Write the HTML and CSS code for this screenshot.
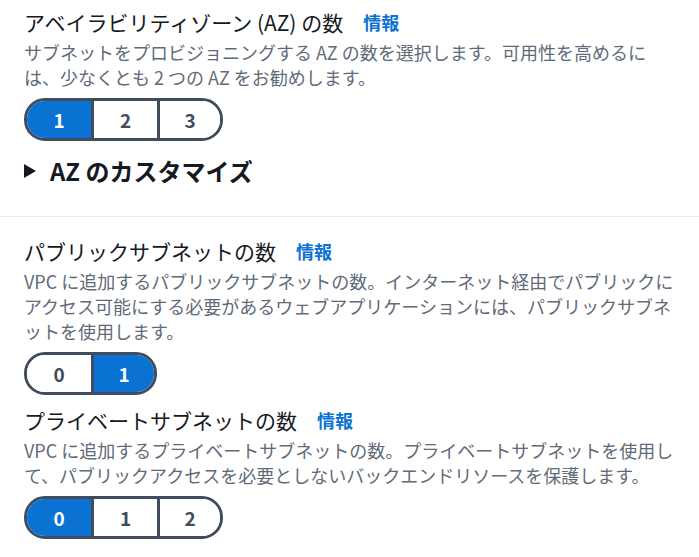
FILE: index.html
```html
<!DOCTYPE html>
<html lang="ja">
<head>
  <meta charset="UTF-8" />
  <meta name="viewport" content="width=device-width, initial-scale=1.0"/>
  <title>VPC 設定</title>
  <link rel="stylesheet" href="styles.css">
</head>
<body>
  <section class="block">
    <div class="field">
      <div class="label">
        <span>アベイラビリティゾーン (AZ) の数</span>
        <a class="info" href="#">情報</a>
      </div>
      <p class="desc">サブネットをプロビジョニングする AZ の数を選択します。可用性を高めるには、少なくとも 2 つの AZ をお勧めします。</p>
      <div class="toggle">
        <button class="seg active">1</button>
        <button class="seg">2</button>
        <button class="seg">3</button>
      </div>
    </div>

    <div class="expand">
      <span class="caret"></span>
      <span>AZ のカスタマイズ</span>
    </div>
  </section>

  <section class="block second">
    <div class="field">
      <div class="label">
        <span>パブリックサブネットの数</span>
        <a class="info" href="#">情報</a>
      </div>
      <p class="desc">VPC に追加するパブリックサブネットの数。インターネット経由でパブリックにアクセス可能にする必要があるウェブアプリケーションには、パブリックサブネットを使用します。</p>
      <div class="toggle">
        <button class="seg">0</button>
        <button class="seg active">1</button>
      </div>
    </div>

    <div class="field">
      <div class="label">
        <span>プライベートサブネットの数</span>
        <a class="info" href="#">情報</a>
      </div>
      <p class="desc">VPC に追加するプライベートサブネットの数。プライベートサブネットを使用して、パブリックアクセスを必要としないバックエンドリソースを保護します。</p>
      <div class="toggle">
        <button class="seg active">0</button>
        <button class="seg">1</button>
        <button class="seg">2</button>
      </div>
    </div>
  </section>
</body>
</html>
```

FILE: styles.css
```css
:root {
  --texto: #16191f;
  --gris: #5f6b7a;
  --azul: #0972d3;
  --borde: #414d5c;
  --linea: #e9ebed;
}
* { box-sizing: border-box; margin: 0; padding: 0; }
body {
  font-family: "Noto Sans CJK JP", "Noto Sans", sans-serif;
  background: #ffffff;
  color: var(--texto);
}
.block {
  padding: 8px 20px 30px 24px;
  border-bottom: 1px solid var(--linea);
}
.block.second {
  border-bottom: none;
  padding-top: 20px;
}
.field + .field { margin-top: 11px; }
.label {
  display: flex;
  align-items: center;
  gap: 20px;
  font-size: 21px;
  line-height: 28px;
}
.info {
  color: var(--azul);
  font-size: 18px;
  font-weight: bold;
  text-decoration: none;
}
.desc {
  margin-top: 4px;
  color: var(--gris);
  font-size: 18px;
  line-height: 25px;
}
.toggle {
  display: inline-flex;
  margin-top: 8px;
  border: 3px solid var(--borde);
  border-radius: 21px;
  overflow: hidden;
}
.seg {
  width: 64px;
  height: 37px;
  border: none;
  background: #ffffff;
  color: var(--borde);
  font-family: inherit;
  font-size: 19px;
  font-weight: bold;
}
.seg + .seg {
  width: 66px;
  border-left: 3px solid var(--borde);
}
.seg:last-child { width: 63px; }
.seg.active {
  background: var(--azul);
  color: #ffffff;
}
.expand {
  display: flex;
  align-items: center;
  gap: 14px;
  margin-top: 15px;
  font-size: 24px;
  line-height: 30px;
  font-weight: bold;
}
.caret {
  width: 0;
  height: 0;
  border-top: 7.5px solid transparent;
  border-bottom: 7.5px solid transparent;
  border-left: 12px solid var(--texto);
}
```
